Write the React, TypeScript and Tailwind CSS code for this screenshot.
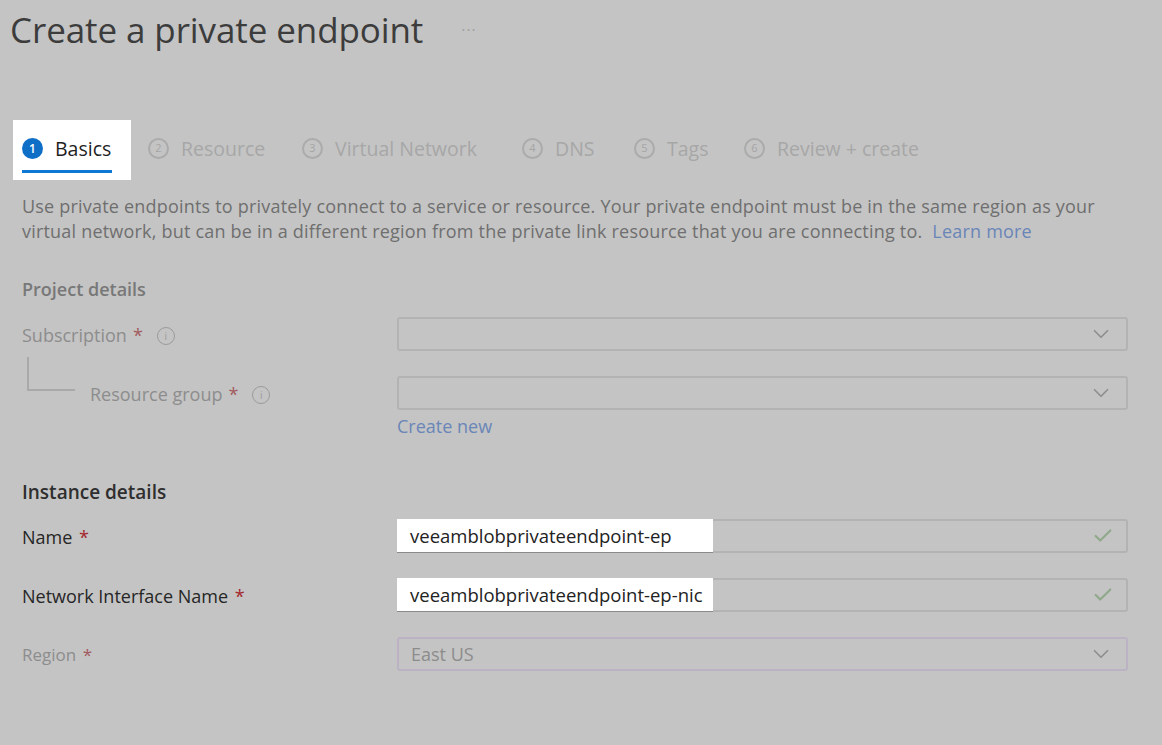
import { ChevronDown, Check } from 'lucide-react';

const tabs = [
  { n: 2, label: 'Resource', w: 'w-[154px]' },
  { n: 3, label: 'Virtual Network', w: 'w-[220px]' },
  { n: 4, label: 'DNS', w: 'w-[112px]' },
  { n: 5, label: 'Tags', w: 'w-[110px]' },
  { n: 6, label: 'Review + create', w: 'w-[190px]' },
];

function InfoIcon() {
  return (
    <span className="ml-[14px] flex h-[18px] w-[18px] items-center justify-center rounded-full border-[1.5px] border-[#9b9b9b] text-[10px] leading-none text-[#9b9b9b]">
      i
    </span>
  );
}

function Dropdown({ value, purple }: { value?: string; purple?: boolean }) {
  return (
    <div
      className={`flex h-[34px] w-[731px] items-center justify-between rounded-[3px] border-2 pl-[12px] pr-[12px] ${
        purple ? 'border-[#bbb3c4]' : 'border-[#b3b3b3]'
      }`}
    >
      <span className="text-[18px] text-[#8c8c8c]">{value}</span>
      <ChevronDown size={26} strokeWidth={1.6} className="text-[#8f8f8f]" />
    </div>
  );
}

function FilledInput({ value }: { value: string }) {
  return (
    <div className="flex h-[34px] w-[731px] items-center justify-between rounded-[3px] border-2 border-[#b3b3b3] pr-[12px]">
      <div className="-m-[2px] flex h-[34px] w-[316px] items-center border-b border-[#8a8a8a] bg-white pl-[13px] text-[18.5px] text-[#222]">
        {value}
      </div>
      <Check size={22} strokeWidth={2.4} className="text-[#90a98b]" />
    </div>
  );
}

export default function App() {
  return (
    <div className="h-[745px] w-[1162px] overflow-hidden bg-[#c4c4c4] font-['Open_Sans',sans-serif]">
      {/* Title */}
      <div className="flex h-[60px] items-center pl-[10px]">
        <h1 className="text-[35px] leading-[44px] tracking-[-0.1px] text-[#3c3c3c]">Create a private endpoint</h1>
        <span className="ml-[38px] text-[16px] leading-none tracking-[1px] text-[#a0a0a0]">···</span>
      </div>

      {/* Tabs */}
      <div className="mt-[60px] flex h-[60px] items-stretch">
        <div className="ml-[13px] flex w-[118px] flex-col bg-white pl-[9px]">
          <div className="mt-[14px] flex items-center">
            <span className="flex h-[21px] w-[21px] items-center justify-center rounded-full bg-[#0f6fc6] text-[12px] font-semibold text-white">
              1
            </span>
            <span className="ml-[12px] text-[19.5px] text-[#1f1f1f]">Basics</span>
          </div>
          <div className="mt-[7px] h-[3px] w-[90px] bg-[#0f78d4]" />
        </div>
        <div className="ml-[17px] flex items-start pt-[14px]">
          {tabs.map((t) => (
            <div key={t.n} className={`flex items-center ${t.w}`}>
              <span className="flex h-[21px] w-[21px] items-center justify-center rounded-full border-2 border-[#ababab] text-[11px] text-[#a5a5a5]">
                {t.n}
              </span>
              <span className="ml-[12px] text-[19.5px] text-[#a7a7a7]">{t.label}</span>
            </div>
          ))}
        </div>
      </div>

      {/* Description */}
      <p className="mt-[14px] w-[1110px] pl-[22px] text-[18px] leading-[25px] tracking-[0.2px] text-[#6f6f6f]">
        Use private endpoints to privately connect to a service or resource. Your private endpoint must be in the same
        region as your virtual network, but can be in a different region from the private link resource that you are
        connecting to.
        <span className="ml-[10px] text-[#6a86b8]">Learn more</span>
      </p>

      {/* Project details */}
      <h2 className="mt-[33px] pl-[22px] text-[18px] leading-[24px] font-semibold text-[#787878]">Project details</h2>

      <div className="mt-[16px] flex items-center pl-[22px]">
        <div className="flex w-[375px] items-center pt-[3px] text-[18px] text-[#8d8d8d]">
          Subscription <span className="ml-[6px] text-[#a25a5e]">*</span>
          <InfoIcon />
        </div>
        <Dropdown />
      </div>

      <div className="relative mt-[25px] flex items-center pl-[22px]">
        <div className="absolute left-[27px] top-[-19px] h-[34px] w-[48px] border-b-2 border-l-2 border-[#a9a9a9]" />
        <div className="flex w-[375px] items-center pl-[68px] pt-[3px] text-[18px] text-[#8d8d8d]">
          Resource group <span className="ml-[6px] text-[#a25a5e]">*</span>
          <InfoIcon />
        </div>
        <Dropdown />
      </div>
      <div className="mt-[6px] pl-[397px] text-[18px] leading-[20px] text-[#6a86b8]">Create new</div>

      {/* Instance details */}
      <h2 className="mt-[44px] pl-[22px] text-[19px] leading-[24px] font-semibold text-[#2e2e2e]">Instance details</h2>

      <div className="mt-[15px] flex items-center pl-[22px]">
        <div className="w-[375px] pt-[2px] text-[18px] text-[#262626]">
          Name <span className="ml-[2px] text-[#a4262c]">*</span>
        </div>
        <FilledInput value="veeamblobprivateendpoint-ep" />
      </div>

      <div className="mt-[25px] flex items-center pl-[22px]">
        <div className="w-[375px] pt-[2px] text-[18px] text-[#262626]">
          Network Interface Name <span className="ml-[2px] text-[#a4262c]">*</span>
        </div>
        <FilledInput value="veeamblobprivateendpoint-ep-nic" />
      </div>

      <div className="mt-[25px] flex items-center pl-[22px]">
        <div className="w-[375px] pt-[2px] text-[17px] text-[#8d8d8d]">
          Region <span className="ml-[2px] text-[#a25a5e]">*</span>
        </div>
        <Dropdown value="East US" purple />
      </div>
    </div>
  );
}
